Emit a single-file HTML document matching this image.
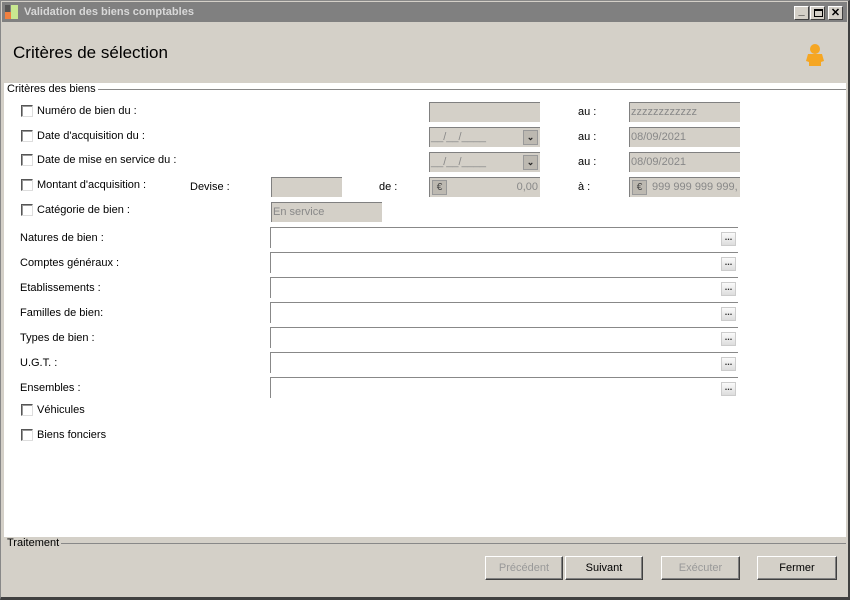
<!DOCTYPE html>
<html><head><meta charset="utf-8"><style>
*{margin:0;padding:0;box-sizing:border-box}
body{width:850px;height:600px;overflow:hidden;background:#d4d0c8;font-family:"Liberation Sans",sans-serif;font-size:11px;color:#000;position:relative}
.a{position:absolute;white-space:nowrap}
.cb{position:absolute;width:12px;height:12px;background:#fff;border:1px solid #555;border-right-color:#ddd;border-bottom-color:#ddd;box-shadow:inset 1px 1px 0 #999}
.f{position:absolute;height:20px;background:#d4d0c8;border-top:1px solid #808080;border-left:1px solid #808080;color:#888;padding-left:1px;line-height:18px}
.w{position:absolute;left:270px;width:468px;height:21px;background:#fff;border-top:1px solid #888;border-left:1px solid #888}
.dots{position:absolute;right:2px;top:4px;width:15px;height:14px;background:linear-gradient(#fafafa,#ddd);border:1px solid #ccc;font-size:9px;line-height:8px;text-align:center;color:#333;font-weight:bold}
.btn{position:absolute;top:556px;height:24px;border:1px solid;border-color:#fff #404040 #404040 #fff;box-shadow:inset -1px -1px 0 #808080;text-align:center;line-height:22px;font-size:11px}
.dd{position:absolute;right:2px;top:2px;width:15px;height:15px;background:#bdb9b1;border:1px solid #999;font-size:9px;line-height:12px;text-align:center;color:#222;font-weight:bold}
.eu{position:absolute;left:2px;top:2px;width:15px;height:15px;background:#bdb9b1;border:1px solid #999;font-size:10px;line-height:13px;text-align:center;color:#444}
</style></head><body>
<div class="a" style="left:0;top:0;width:850px;height:600px;border:1px solid #888;border-right:2px solid #404040;border-bottom:3px solid #404040"></div>
<div class="a" style="left:2px;top:2px;width:845px;height:20px;background:#808080"></div>
<div class="a" style="left:5px;top:5px;width:5px;height:7px;background:#555"></div>
<div class="a" style="left:5px;top:12px;width:6px;height:7px;background:#f08040"></div>
<div class="a" style="left:11px;top:5px;width:7px;height:14px;background:#c8e890"></div>
<div class="a" style="left:24px;top:6px;color:#d8d8d8;font-weight:bold;font-size:11px">Validation des biens comptables</div>
<div class="a" style="left:794px;top:6px;width:15px;height:14px;background:#d4d0c8;border:1px solid;border-color:#fff #404040 #404040 #fff;text-align:center;line-height:8px;font-weight:bold">_</div>
<div class="a" style="left:810px;top:6px;width:15px;height:14px;background:#d4d0c8;border:1px solid;border-color:#fff #404040 #404040 #fff"><div style="margin:2px 3px;width:9px;height:8px;border:1px solid #000;border-top-width:2px"></div></div>
<div class="a" style="left:828px;top:6px;width:15px;height:14px;background:#d4d0c8;border:1px solid;border-color:#fff #404040 #404040 #fff;text-align:center;line-height:12px;font-weight:bold;font-size:11px">✕</div>
<div class="a" style="left:13px;top:43px;font-size:17px">Critères de sélection</div>
<svg class="a" style="left:805px;top:43px" width="20" height="24"><circle cx="10" cy="6" r="5" fill="#f5a623"/><path d="M3 11h14l2 7-3 1v4H4v-4l-3-1z" fill="#f5a623"/></svg>
<div class="a" style="left:4px;top:83px;width:842px;height:454px;background:#fff"></div>
<div class="a" style="left:93px;top:89px;width:753px;height:1px;background:#888"></div>
<div class="a" style="left:7px;top:83px;background:#fff;padding-right:2px">Critères des biens</div>

<div class="cb" style="left:21px;top:105px"></div><div class="a" style="left:37px;top:105px">Numéro de bien du :</div>
<div class="cb" style="left:21px;top:130px"></div><div class="a" style="left:37px;top:130px">Date d'acquisition du :</div>
<div class="cb" style="left:21px;top:154px"></div><div class="a" style="left:37px;top:154px">Date de mise en service du :</div>
<div class="cb" style="left:21px;top:179px"></div><div class="a" style="left:37px;top:179px">Montant d'acquisition :</div>
<div class="cb" style="left:21px;top:204px"></div><div class="a" style="left:37px;top:204px">Catégorie de bien :</div>

<div class="f" style="left:429px;top:102px;width:111px"></div>
<div class="f" style="left:429px;top:127px;width:111px">__/__/____<div class="dd">⌄</div></div>
<div class="f" style="left:429px;top:152px;width:111px">__/__/____<div class="dd">⌄</div></div>
<div class="f" style="left:429px;top:177px;width:111px;text-align:right;padding-right:2px">0,00<div class="eu">€</div></div>
<div class="a" style="left:578px;top:106px">au :</div>
<div class="a" style="left:578px;top:131px">au :</div>
<div class="a" style="left:578px;top:156px">au :</div>
<div class="a" style="left:578px;top:181px">à :</div>
<div class="f" style="left:629px;top:102px;width:111px">zzzzzzzzzzzz</div>
<div class="f" style="left:629px;top:127px;width:111px">08/09/2021</div>
<div class="f" style="left:629px;top:152px;width:111px">08/09/2021</div>
<div class="f" style="left:629px;top:177px;width:111px;padding-left:22px;overflow:hidden">999 999 999 999,<div class="eu">€</div></div>
<div class="a" style="left:190px;top:181px">Devise :</div>
<div class="f" style="left:271px;top:177px;width:71px"></div>
<div class="a" style="left:379px;top:181px">de :</div>
<div class="f" style="left:271px;top:202px;width:111px">En service</div>

<div class="a" style="left:20px;top:232px">Natures de bien :</div><div class="w" style="top:227px"><div class="dots">...</div></div>
<div class="a" style="left:20px;top:257px">Comptes généraux :</div><div class="w" style="top:252px"><div class="dots">...</div></div>
<div class="a" style="left:20px;top:282px">Etablissements :</div><div class="w" style="top:277px"><div class="dots">...</div></div>
<div class="a" style="left:20px;top:307px">Familles de bien:</div><div class="w" style="top:302px"><div class="dots">...</div></div>
<div class="a" style="left:20px;top:332px">Types de bien :</div><div class="w" style="top:327px"><div class="dots">...</div></div>
<div class="a" style="left:20px;top:357px">U.G.T. :</div><div class="w" style="top:352px"><div class="dots">...</div></div>
<div class="a" style="left:20px;top:382px">Ensembles :</div><div class="w" style="top:377px"><div class="dots">...</div></div>
<div class="cb" style="left:21px;top:404px"></div><div class="a" style="left:37px;top:404px">Véhicules</div>
<div class="cb" style="left:21px;top:429px"></div><div class="a" style="left:37px;top:429px">Biens fonciers</div>

<div class="a" style="left:60px;top:543px;width:786px;height:1px;background:#888"></div>
<div class="a" style="left:7px;top:537px;background:#d4d0c8;padding-right:2px">Traitement</div>
<div class="btn" style="left:485px;width:78px;color:#999">Précédent</div>
<div class="btn" style="left:565px;width:78px">Suivant</div>
<div class="btn" style="left:661px;width:79px;color:#999">Exécuter</div>
<div class="btn" style="left:757px;width:80px">Fermer</div>
</body></html>
